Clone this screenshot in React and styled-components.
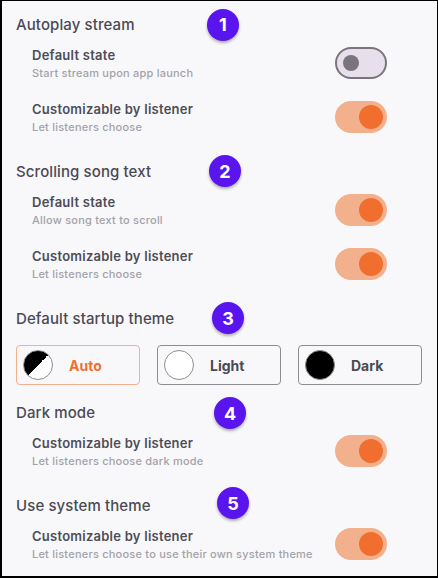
import React, { useState } from "react";
import styled, { createGlobalStyle } from "styled-components";

const GlobalStyle = createGlobalStyle`
  * { box-sizing: border-box; }
  body {
    margin: 0;
    background: #f8f8fa;
    font-family: Inter, "Noto Sans", "Liberation Sans", sans-serif;
  }
`;

const sections = [
  {
    title: "Autoplay stream",
    badge: { n: 1, left: 191, top: -6.5 },
    rows: [
      { key: "auto-default", label: "Default state", hint: "Start stream upon app launch", on: false },
      { key: "auto-custom", label: "Customizable by listener", hint: "Let listeners choose", on: true },
    ],
  },
  {
    title: "Scrolling song text",
    badge: { n: 2, left: 193, top: -7 },
    rows: [
      { key: "scroll-default", label: "Default state", hint: "Allow song text to scroll", on: true },
      { key: "scroll-custom", label: "Customizable by listener", hint: "Let listeners choose", on: true },
    ],
  },
  {
    title: "Default startup theme",
    badge: { n: 3, left: 196, top: -7 },
    themes: true,
  },
  {
    title: "Dark mode",
    badge: { n: 4, left: 198, top: -6 },
    rows: [
      { key: "dark-custom", label: "Customizable by listener", hint: "Let listeners choose dark mode", on: true },
    ],
  },
  {
    title: "Use system theme",
    badge: { n: 5, left: 201, top: -9 },
    rows: [
      {
        key: "system-custom",
        label: "Customizable by listener",
        hint: "Let listeners choose to use their own system theme",
        on: true,
      },
    ],
  },
];

const themes = [
  { id: "auto", name: "Auto" },
  { id: "light", name: "Light" },
  { id: "dark", name: "Dark" },
];

const App = () => {
  const [toggles, setToggles] = useState(() =>
    Object.fromEntries(sections.flatMap((s) => s.rows || []).map((r) => [r.key, r.on]))
  );
  const [theme, setTheme] = useState("auto");

  return (
    <>
      <GlobalStyle />
      <Frame>
        {sections.map((section) => (
          <Section key={section.title}>
            <SectionTitle>{section.title}</SectionTitle>
            <Badge $left={section.badge.left} $top={section.badge.top}>
              {section.badge.n}
            </Badge>
            {section.themes ? (
              <ThemeGrid>
                {themes.map((t) => (
                  <ThemeButton
                    key={t.id}
                    $active={theme === t.id}
                    onClick={() => setTheme(t.id)}
                  >
                    <Swatch $kind={t.id} />
                    {t.name}
                  </ThemeButton>
                ))}
              </ThemeGrid>
            ) : (
              <Rows>
                {section.rows.map((row) => (
                  <Row key={row.key}>
                    <RowText>
                      <Label>{row.label}</Label>
                      <Hint>{row.hint}</Hint>
                    </RowText>
                    <Switch
                      role="switch"
                      aria-checked={toggles[row.key]}
                      $on={toggles[row.key]}
                      onClick={() =>
                        setToggles((prev) => ({ ...prev, [row.key]: !prev[row.key] }))
                      }
                    >
                      <Knob $on={toggles[row.key]} />
                    </Switch>
                  </Row>
                ))}
              </Rows>
            )}
          </Section>
        ))}
      </Frame>
    </>
  );
};

const Frame = styled.div`
  width: 438px;
  height: 578px;
  overflow: hidden;
  background: #f8f8fa;
  border-style: solid;
  border-color: #000;
  border-width: 1px 1px 2px 2px;
  padding: 14px 15px 0 14px;
`;

const Section = styled.section`
  position: relative;
  margin-bottom: 18px;
`;

const SectionTitle = styled.h2`
  margin: 0;
  font-size: 15px;
  line-height: 20px;
  font-weight: 500;
  letter-spacing: 0.1px;
  color: #4b4a54;
`;

const Badge = styled.div`
  position: absolute;
  left: ${(p) => p.$left}px;
  top: ${(p) => p.$top}px;
  width: 32px;
  height: 32px;
  border-radius: 50%;
  background: #5a15ef;
  color: #fff;
  display: flex;
  align-items: center;
  justify-content: center;
  font-size: 18px;
  font-weight: 700;
  box-shadow: 0 2px 3px rgba(0, 0, 0, 0.3);
`;

const Rows = styled.div`
  margin-top: 1px;
  padding: 0 35px 0 16px;
`;

const Row = styled.div`
  height: 54px;
  display: flex;
  align-items: center;
  justify-content: space-between;
`;

const RowText = styled.div`
  display: flex;
  flex-direction: column;
  gap: 1px;
  margin-top: 1px;
`;

const Label = styled.span`
  font-size: 13px;
  line-height: 18px;
  font-weight: 600;
  letter-spacing: 0.25px;
  color: #4e4d57;
`;

const Hint = styled.span`
  font-size: 11px;
  line-height: 16px;
  font-weight: 500;
  letter-spacing: 0.22px;
  color: #a3a2a9;
`;

const Switch = styled.button`
  position: relative;
  width: 52px;
  height: 32px;
  padding: 0;
  border-radius: 16px;
  cursor: pointer;
  border: 2px solid ${(p) => (p.$on ? "#f3b08c" : "#79747e")};
  background: ${(p) => (p.$on ? "#f3b08c" : "#e7e0ec")};
`;

const Knob = styled.span`
  position: absolute;
  top: 50%;
  border-radius: 50%;
  transform: translateY(-50%);
  width: ${(p) => (p.$on ? 24 : 16)}px;
  height: ${(p) => (p.$on ? 24 : 16)}px;
  left: ${(p) => (p.$on ? 22 : 6)}px;
  background: ${(p) => (p.$on ? "#f06f2f" : "#79747e")};
`;

const ThemeGrid = styled.div`
  margin-top: 16px;
  display: grid;
  grid-template-columns: repeat(3, 1fr);
  gap: 17px;
`;

const ThemeButton = styled.button`
  height: 40px;
  display: flex;
  align-items: center;
  gap: 16px;
  padding: 0 6px;
  background: transparent;
  border-radius: 4px;
  cursor: pointer;
  font-family: inherit;
  font-size: 14px;
  font-weight: 700;
  border: 1px solid ${(p) => (p.$active ? "#f3b08c" : "#8e8c93")};
  color: ${(p) => (p.$active ? "#f06f2f" : "#4b4a54")};
`;

const Swatch = styled.span`
  width: 30px;
  height: 30px;
  flex: none;
  border-radius: 50%;
  border: 1px solid #8e8e8e;
  background: ${(p) =>
    p.$kind === "auto"
      ? "linear-gradient(to bottom right, #000 50%, #fff 50%)"
      : p.$kind === "dark"
      ? "#000"
      : "#fff"};
`;

export default App;
